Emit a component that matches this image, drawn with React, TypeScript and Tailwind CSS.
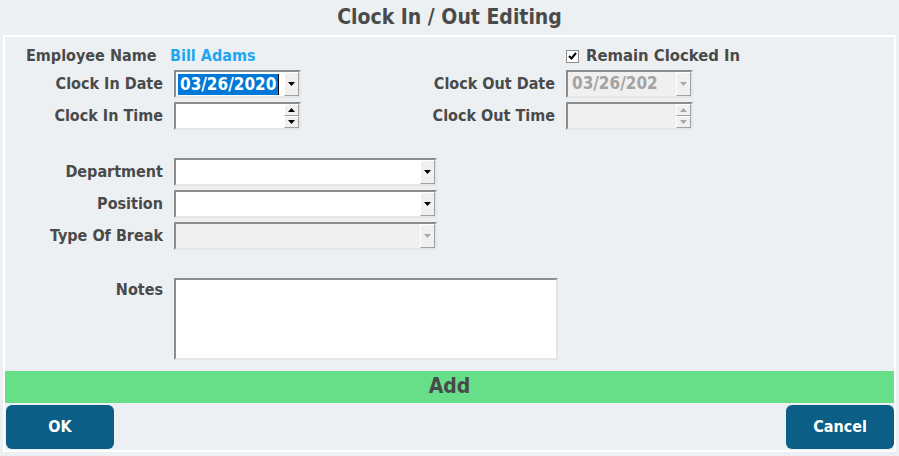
import React from "react";

const font = { fontFamily: '"DejaVu Sans Condensed", "DejaVu Sans", Tahoma, sans-serif' };

function Label({ children, width = "w-[158px]" }: { children: React.ReactNode; width?: string }) {
  return (
    <span className={`${width} block shrink-0 text-right text-[16px] font-bold leading-[20px] text-[#4a4a4a]`}>
      {children}
    </span>
  );
}

function Arrow({ up, disabled }: { up?: boolean; disabled?: boolean }) {
  return (
    <svg width="7" height="4" viewBox="0 0 7 4">
      <path d={up ? "M3.5 0 L7 4 L0 4 Z" : "M0 0 L7 0 L3.5 4 Z"} fill={disabled ? "#a8a8a8" : "#000"} />
    </svg>
  );
}

function RaisedBtn({ children, className = "" }: { children: React.ReactNode; className?: string }) {
  return (
    <div
      className={`flex items-center justify-center border border-t-white border-l-white border-b-[#a0a0a0] border-r-[#a0a0a0] bg-[#f0f0f0] ${className}`}
    >
      {children}
    </div>
  );
}

function Sunken({
  width,
  disabled,
  children,
  kind,
  height = "h-[28px]",
}: {
  width: string;
  disabled?: boolean;
  children?: React.ReactNode;
  kind?: "drop" | "spin";
  height?: string;
}) {
  return (
    <div
      className={`${width} ${height} flex shrink-0 border-2 border-t-[#8c8c8c] border-l-[#8c8c8c] border-b-[#e6e6e6] border-r-[#e6e6e6] ${
        disabled ? "bg-[#f0f0f0]" : "bg-white"
      }`}
    >
      <div className="flex min-w-0 flex-1 items-center overflow-hidden">{children}</div>
      {kind === "drop" && (
        <RaisedBtn className="w-[15px] shrink-0">
          <Arrow disabled={disabled} />
        </RaisedBtn>
      )}
      {kind === "spin" && (
        <div className="flex w-[15px] shrink-0 flex-col">
          <RaisedBtn className="flex-1">
            <Arrow up disabled={disabled} />
          </RaisedBtn>
          <RaisedBtn className="flex-1">
            <Arrow disabled={disabled} />
          </RaisedBtn>
        </div>
      )}
    </div>
  );
}

export default function App() {
  return (
    <div className="flex h-[456px] w-[899px] flex-col bg-[#ecf0f3] text-[#4a4a4a]" style={font}>
      <div className="flex h-[35px] items-center justify-center text-[21px] font-bold">Clock In / Out Editing</div>

      <div className="mx-[3px] flex h-[417px] flex-col border-2 border-white">
        <div className="flex h-[334px] flex-col pt-[5px]">
          <div className="flex h-[28px] items-center">
            <div className="flex w-[561px] items-center">
              <span className="w-[165px] shrink-0 pl-[21px] text-[16px] font-bold">Employee Name</span>
              <span className="text-[16px] font-bold text-[#1ea6f2]">Bill Adams</span>
            </div>
            <div className="flex items-center gap-[7px]">
              <div className="flex h-[13px] w-[13px] items-center justify-center border border-[#8c8c8c] bg-white">
                <svg width="9" height="8" viewBox="0 0 9 8">
                  <path d="M1 4 L3.5 6.5 L8 1" stroke="#000" strokeWidth="2" fill="none" />
                </svg>
              </div>
              <span className="text-[16.5px] font-bold">Remain Clocked In</span>
            </div>
          </div>

          <div className="flex items-center">
            <Label>Clock In Date</Label>
            <div className="ml-[11px]">
              <Sunken width="w-[127px]" kind="drop">
                <div className="ml-[2px] flex items-center">
                  <span className="bg-[#0078d7] px-[2px] text-[17px] font-bold leading-[21px] text-white">03/26/2020</span>
                  <span className="h-[21px] w-[1px] bg-black" />
                </div>
              </Sunken>
            </div>
            <Label width="w-[254px]">Clock Out Date</Label>
            <div className="ml-[11px]">
              <Sunken width="w-[127px]" kind="drop" disabled>
                <span className="whitespace-nowrap pl-[4px] text-[17px] font-bold text-[#a3a3a3]">03/26/202</span>
              </Sunken>
            </div>
          </div>

          <div className="mt-[4px] flex items-center">
            <Label>Clock In Time</Label>
            <div className="ml-[11px]">
              <Sunken width="w-[127px]" kind="spin" />
            </div>
            <Label width="w-[254px]">Clock Out Time</Label>
            <div className="ml-[11px]">
              <Sunken width="w-[127px]" kind="spin" disabled />
            </div>
          </div>

          <div className="mt-[28px] flex items-center">
            <Label>Department</Label>
            <div className="ml-[11px]">
              <Sunken width="w-[263px]" kind="drop" />
            </div>
          </div>
          <div className="mt-[4px] flex items-center">
            <Label>Position</Label>
            <div className="ml-[11px]">
              <Sunken width="w-[263px]" kind="drop" />
            </div>
          </div>
          <div className="mt-[4px] flex items-center">
            <Label>Type Of Break</Label>
            <div className="ml-[11px]">
              <Sunken width="w-[263px]" kind="drop" disabled />
            </div>
          </div>

          <div className="mt-[28px] flex items-start">
            <div className="shrink-0 pt-[2px]">
              <Label>Notes</Label>
            </div>
            <div className="ml-[11px]">
              <Sunken width="w-[384px]" height="h-[82px]" />
            </div>
          </div>
        </div>

        <div className="flex h-[32px] items-center justify-center bg-[#66df88] text-[21px] font-bold text-[#4a4a4a]">
          Add
        </div>

        <div className="mt-[2px] flex h-[44px] justify-between pl-[1px]">
          <button className="flex w-[108px] items-center justify-center rounded-[6px] bg-[#0b5f86] text-[16px] font-bold text-white">
            OK
          </button>
          <button className="flex w-[108px] items-center justify-center rounded-[6px] bg-[#0b5f86] text-[16px] font-bold text-white">
            Cancel
          </button>
        </div>
      </div>
    </div>
  );
}
